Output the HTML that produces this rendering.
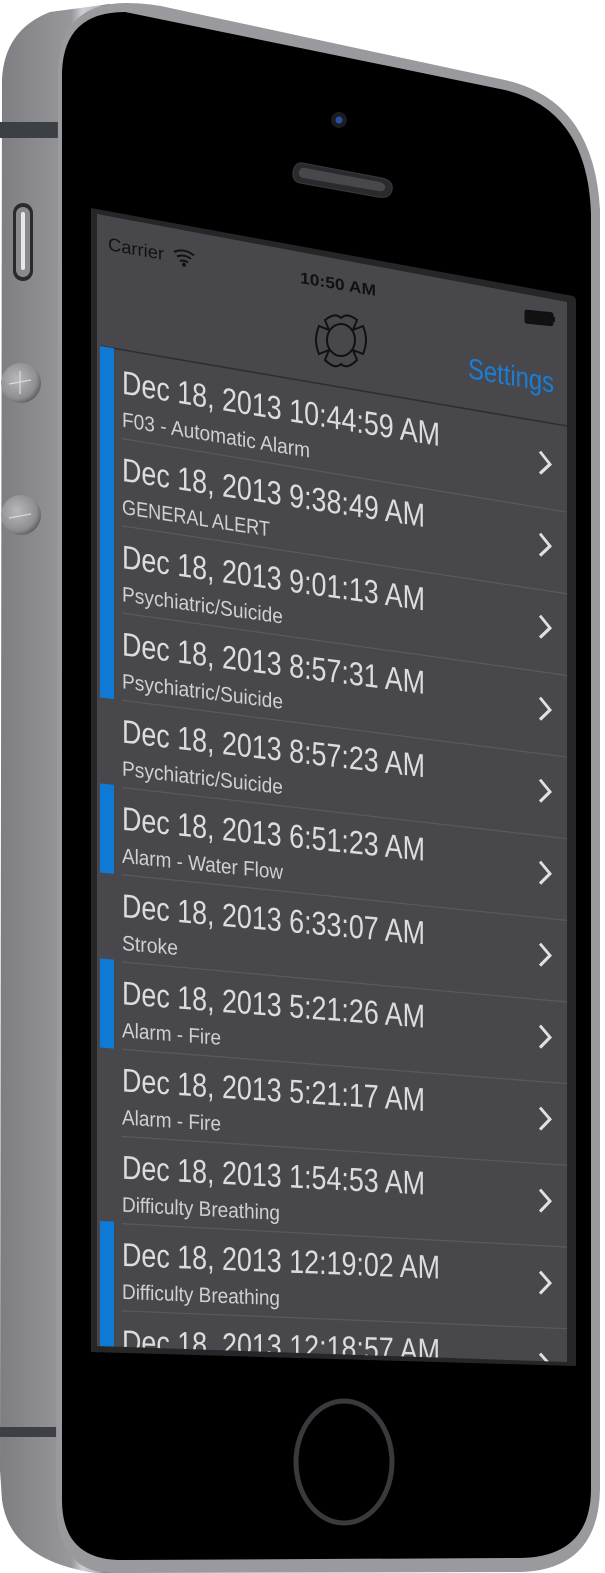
<!DOCTYPE html>
<html><head><meta charset="utf-8"><style>
html,body{margin:0;padding:0;background:#fff;}
svg{display:block;}
text{font-family:"Liberation Sans",sans-serif;}
</style></head><body>
<svg width="605" height="1573" viewBox="0 0 605 1573" xmlns="http://www.w3.org/2000/svg">
<defs>
<linearGradient id="side" x1="0" x2="1" y1="0" y2="0">
<stop offset="0" stop-color="#7d7d82"/><stop offset="0.65" stop-color="#98989c"/><stop offset="0.75" stop-color="#cfcfd3"/><stop offset="0.9" stop-color="#b5b5ba"/><stop offset="1" stop-color="#3a3a3e"/>
</linearGradient>
<radialGradient id="btn" cx="0.4" cy="0.4" r="0.7">
<stop offset="0" stop-color="#b8b8bc"/><stop offset="0.7" stop-color="#8e8e92"/><stop offset="1" stop-color="#4a4a4e"/>
</radialGradient>
<clipPath id="scr"><path d="M97,214 L567,302 L567,1362 L97,1346 Z"/></clipPath>
</defs>
<!-- left silver side -->
<path d="M2,80 Q4,30 50,12 L110,4 L110,1573 L95,1573 Q10,1560 2,1500 L0,1470 Z" fill="url(#side)"/>
<rect x="0" y="122" width="62" height="16" fill="#3c3f44"/>
<rect x="0" y="1427" width="62" height="10" fill="#3c3f44"/>
<!-- outer rim -->
<path d="M58,70 Q60,4 125,3 Q150,3 170,8 L505,80 Q594,100 600,210 L600,1490 Q598,1570 520,1572 L110,1573 Q56,1571 56,1500 Z" fill="#9a9a9e"/>
<!-- front black face -->
<path d="M62,72 Q64,12 125,12 L505,90 Q588,110 591,215 L591,1490 Q590,1557 520,1558 L118,1560 Q62,1558 62,1500 Z" fill="#000"/>
<!-- camera & speaker -->
<circle cx="339" cy="120" r="8" fill="#1c1c20"/><circle cx="339" cy="120" r="3.5" fill="#2a4fa0"/>
<path d="M302,163 L382,178 Q394,181 392,190 Q390,199 378,197 L300,183 Q292,181 293,172 Q295,162 302,163 Z" fill="#2a2a2e" stroke="#3a3a3e" stroke-width="1"/>
<path d="M305,168 L380,182 Q386,184 385,188 Q384,192 378,191 L303,178 Q298,177 299,172 Q300,167 305,168 Z" fill="#48484c"/>
<!-- side buttons -->
<rect x="13" y="203" width="20" height="78" rx="10" fill="#2a2a2e"/>
<rect x="16" y="207" width="14" height="70" rx="7" fill="#8a8a8e"/>
<rect x="21" y="212" width="4" height="58" rx="2" fill="#e8e8ec"/>
<circle cx="21" cy="383" r="20" fill="url(#btn)"/>
<path d="M9,384 L31,380 M20,371 L20,394" stroke="#d8d8dc" stroke-width="1.3"/>
<circle cx="21" cy="515" r="20" fill="url(#btn)"/>
<path d="M9,518 L31,514" stroke="#d8d8dc" stroke-width="1.3"/>
<!-- home -->
<ellipse cx="344" cy="1462" rx="48" ry="61" fill="#000" stroke="#3a3a3e" stroke-width="5"/>
<!-- screen -->
<path d="M91,208 L573,296 Q576,297 576,302 L576,1366 L91,1352 Z" fill="#262628"/>
<path d="M97,214 L567,302 L567,1362 L97,1346 Z" fill="#48484c"/>
<g clip-path="url(#scr)">
<g transform="translate(108,250) matrix(1,0.18,0,1,0,0)"><text x="0" y="0" font-size="18" fill="#111" textLength="56" lengthAdjust="spacingAndGlyphs">Carrier</text>
<path d="M66,-10 Q76,-16 86,-10 M69,-6 Q76,-10 83,-6 M72,-2 Q76,-4 80,-2" stroke="#111" stroke-width="2" fill="none"/><circle cx="76" cy="1" r="2" fill="#111"/></g>
<g transform="translate(300,283) matrix(1,0.17,0,1,0,0)"><text x="0" y="0" font-size="16" font-weight="bold" fill="#111" textLength="76" lengthAdjust="spacingAndGlyphs">10:50 AM</text></g>
<g transform="translate(525,310) matrix(1,0.1,0,1,0,0)"><rect x="0" y="0" width="28" height="13" rx="2" fill="#111" stroke="#111"/><rect x="28" y="4" width="2" height="5" fill="#111"/></g>
<g transform="translate(341,340)" fill="none" stroke="#111" stroke-width="2">
<ellipse cx="0" cy="0" rx="14" ry="16"/>
<path d="M-12,-10 L-16,-20 Q-6,-28 0,-22 Q6,-28 16,-20 L12,-10"/>
<path d="M-12,10 L-16,20 Q-6,30 0,24 Q6,30 16,20 L12,10"/>
<path d="M-12,-10 L-22,-14 Q-28,0 -22,14 L-12,10"/>
<path d="M12,-10 L22,-14 Q28,0 22,14 L12,10"/>
</g>
<g transform="translate(468,378) matrix(1,0.17,0,1,0,0)"><text x="0" y="0" font-size="29" fill="#1a7ed6" textLength="86" lengthAdjust="spacingAndGlyphs">Settings</text></g>
<path d="M100,346 L567,426" stroke="#2e2e30" stroke-width="1.5"/>

<g transform="translate(100,347) matrix(1,0.165,0,1,0,0)"><rect x="0" y="-1" width="14" height="89" fill="#0f7ad6"/><text x="22" y="43" font-size="33" fill="#dcdcdc" textLength="318" lengthAdjust="spacingAndGlyphs">Dec 18, 2013 10:44:59 AM</text><text x="22" y="76" font-size="21" fill="#d0d0d0" textLength="188" lengthAdjust="spacingAndGlyphs">F03 - Automatic Alarm</text><path d="M440,32 L450,43 L440,54" fill="none" stroke="#e0e0e0" stroke-width="3"/><path d="M22,88 L467,88" stroke="#5a5a5e" stroke-width="1.2"/></g>

<g transform="translate(100,434.5) matrix(1,0.1525,0,1,0,0)"><rect x="0" y="-1" width="14" height="89" fill="#0f7ad6"/><text x="22" y="43" font-size="33" fill="#dcdcdc" textLength="303" lengthAdjust="spacingAndGlyphs">Dec 18, 2013 9:38:49 AM</text><text x="22" y="76" font-size="21" fill="#d0d0d0" textLength="148" lengthAdjust="spacingAndGlyphs">GENERAL ALERT</text><path d="M440,32 L450,43 L440,54" fill="none" stroke="#e0e0e0" stroke-width="3"/><path d="M22,88 L467,88" stroke="#5a5a5e" stroke-width="1.2"/></g>

<g transform="translate(100,522) matrix(1,0.14,0,1,0,0)"><rect x="0" y="-1" width="14" height="89" fill="#0f7ad6"/><text x="22" y="43" font-size="33" fill="#dcdcdc" textLength="303" lengthAdjust="spacingAndGlyphs">Dec 18, 2013 9:01:13 AM</text><text x="22" y="76" font-size="21" fill="#d0d0d0" textLength="161" lengthAdjust="spacingAndGlyphs">Psychiatric/Suicide</text><path d="M440,32 L450,43 L440,54" fill="none" stroke="#e0e0e0" stroke-width="3"/><path d="M22,88 L467,88" stroke="#5a5a5e" stroke-width="1.2"/></g>

<g transform="translate(100,609.5) matrix(1,0.1275,0,1,0,0)"><rect x="0" y="-1" width="14" height="89" fill="#0f7ad6"/><text x="22" y="43" font-size="33" fill="#dcdcdc" textLength="303" lengthAdjust="spacingAndGlyphs">Dec 18, 2013 8:57:31 AM</text><text x="22" y="76" font-size="21" fill="#d0d0d0" textLength="161" lengthAdjust="spacingAndGlyphs">Psychiatric/Suicide</text><path d="M440,32 L450,43 L440,54" fill="none" stroke="#e0e0e0" stroke-width="3"/><path d="M22,88 L467,88" stroke="#5a5a5e" stroke-width="1.2"/></g>

<g transform="translate(100,697) matrix(1,0.115,0,1,0,0)"><text x="22" y="43" font-size="33" fill="#dcdcdc" textLength="303" lengthAdjust="spacingAndGlyphs">Dec 18, 2013 8:57:23 AM</text><text x="22" y="76" font-size="21" fill="#d0d0d0" textLength="161" lengthAdjust="spacingAndGlyphs">Psychiatric/Suicide</text><path d="M440,32 L450,43 L440,54" fill="none" stroke="#e0e0e0" stroke-width="3"/><path d="M22,88 L467,88" stroke="#5a5a5e" stroke-width="1.2"/></g>

<g transform="translate(100,784.5) matrix(1,0.1025,0,1,0,0)"><rect x="0" y="-1" width="14" height="89" fill="#0f7ad6"/><text x="22" y="43" font-size="33" fill="#dcdcdc" textLength="303" lengthAdjust="spacingAndGlyphs">Dec 18, 2013 6:51:23 AM</text><text x="22" y="76" font-size="21" fill="#d0d0d0" textLength="161" lengthAdjust="spacingAndGlyphs">Alarm - Water Flow</text><path d="M440,32 L450,43 L440,54" fill="none" stroke="#e0e0e0" stroke-width="3"/><path d="M22,88 L467,88" stroke="#5a5a5e" stroke-width="1.2"/></g>

<g transform="translate(100,872) matrix(1,0.09,0,1,0,0)"><text x="22" y="43" font-size="33" fill="#dcdcdc" textLength="303" lengthAdjust="spacingAndGlyphs">Dec 18, 2013 6:33:07 AM</text><text x="22" y="76" font-size="21" fill="#d0d0d0" textLength="56" lengthAdjust="spacingAndGlyphs">Stroke</text><path d="M440,32 L450,43 L440,54" fill="none" stroke="#e0e0e0" stroke-width="3"/><path d="M22,88 L467,88" stroke="#5a5a5e" stroke-width="1.2"/></g>

<g transform="translate(100,959.5) matrix(1,0.0775,0,1,0,0)"><rect x="0" y="-1" width="14" height="89" fill="#0f7ad6"/><text x="22" y="43" font-size="33" fill="#dcdcdc" textLength="303" lengthAdjust="spacingAndGlyphs">Dec 18, 2013 5:21:26 AM</text><text x="22" y="76" font-size="21" fill="#d0d0d0" textLength="99" lengthAdjust="spacingAndGlyphs">Alarm - Fire</text><path d="M440,32 L450,43 L440,54" fill="none" stroke="#e0e0e0" stroke-width="3"/><path d="M22,88 L467,88" stroke="#5a5a5e" stroke-width="1.2"/></g>

<g transform="translate(100,1047) matrix(1,0.065,0,1,0,0)"><text x="22" y="43" font-size="33" fill="#dcdcdc" textLength="303" lengthAdjust="spacingAndGlyphs">Dec 18, 2013 5:21:17 AM</text><text x="22" y="76" font-size="21" fill="#d0d0d0" textLength="99" lengthAdjust="spacingAndGlyphs">Alarm - Fire</text><path d="M440,32 L450,43 L440,54" fill="none" stroke="#e0e0e0" stroke-width="3"/><path d="M22,88 L467,88" stroke="#5a5a5e" stroke-width="1.2"/></g>

<g transform="translate(100,1134.5) matrix(1,0.0525,0,1,0,0)"><text x="22" y="43" font-size="33" fill="#dcdcdc" textLength="303" lengthAdjust="spacingAndGlyphs">Dec 18, 2013 1:54:53 AM</text><text x="22" y="76" font-size="21" fill="#d0d0d0" textLength="158" lengthAdjust="spacingAndGlyphs">Difficulty Breathing</text><path d="M440,32 L450,43 L440,54" fill="none" stroke="#e0e0e0" stroke-width="3"/><path d="M22,88 L467,88" stroke="#5a5a5e" stroke-width="1.2"/></g>

<g transform="translate(100,1222) matrix(1,0.04,0,1,0,0)"><rect x="0" y="-1" width="14" height="89" fill="#0f7ad6"/><text x="22" y="43" font-size="33" fill="#dcdcdc" textLength="318" lengthAdjust="spacingAndGlyphs">Dec 18, 2013 12:19:02 AM</text><text x="22" y="76" font-size="21" fill="#d0d0d0" textLength="158" lengthAdjust="spacingAndGlyphs">Difficulty Breathing</text><path d="M440,32 L450,43 L440,54" fill="none" stroke="#e0e0e0" stroke-width="3"/><path d="M22,88 L467,88" stroke="#5a5a5e" stroke-width="1.2"/></g>

<g transform="translate(100,1309.5) matrix(1,0.0275,0,1,0,0)"><rect x="0" y="-1" width="14" height="89" fill="#0f7ad6"/><text x="22" y="43" font-size="33" fill="#dcdcdc" textLength="318" lengthAdjust="spacingAndGlyphs">Dec 18, 2013 12:18:57 AM</text><text x="22" y="76" font-size="21" fill="#d0d0d0" textLength="158" lengthAdjust="spacingAndGlyphs">Difficulty Breathing</text><path d="M440,32 L450,43 L440,54" fill="none" stroke="#e0e0e0" stroke-width="3"/></g>
</g>
</svg>
</body></html>
